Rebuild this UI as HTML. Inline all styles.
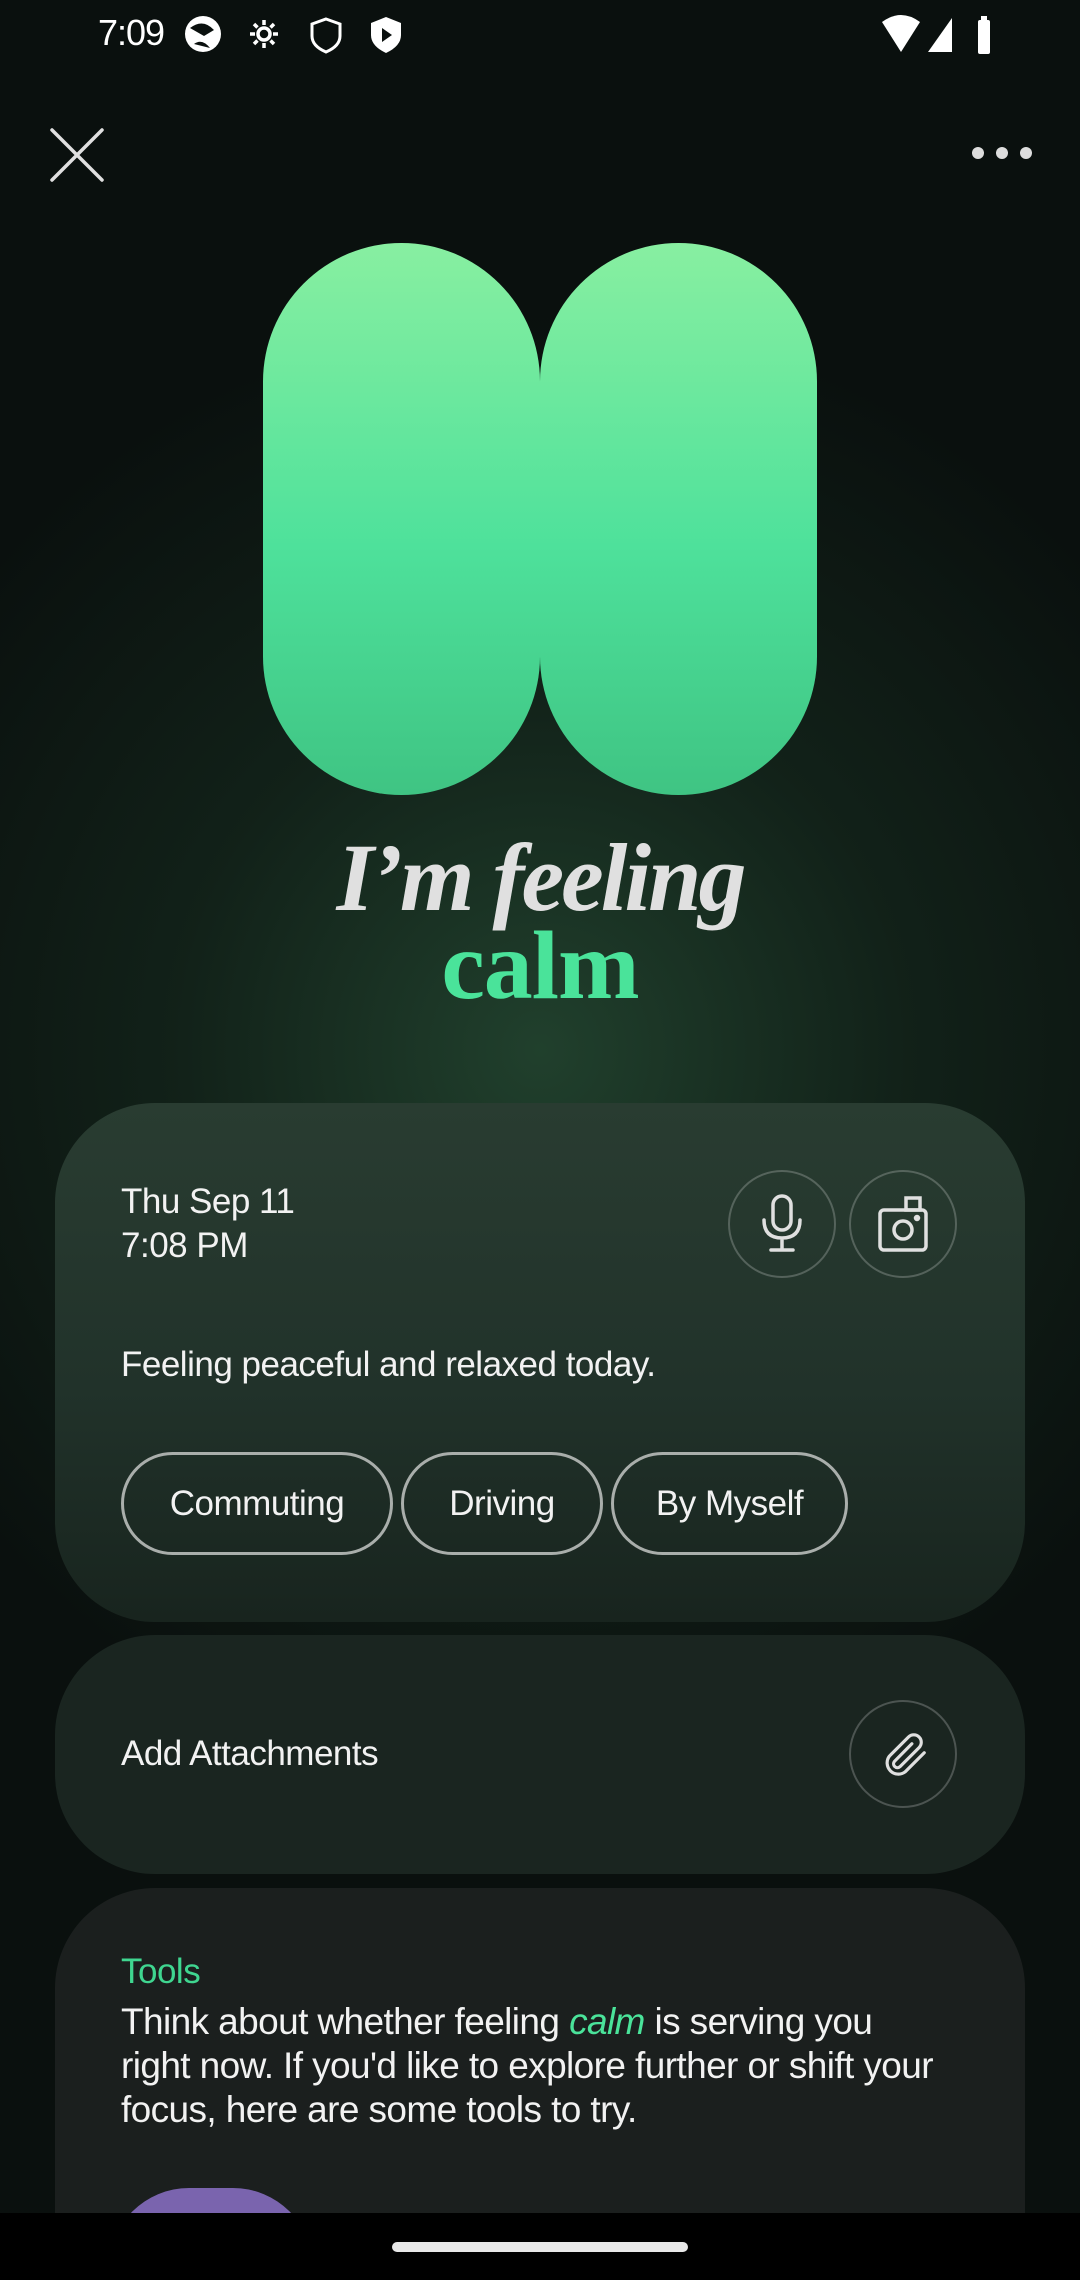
<!DOCTYPE html>
<html style="overflow:hidden;width:1080px;height:2280px"><head><meta charset="utf-8"><style>
*{margin:0;padding:0;box-sizing:border-box}
body{width:1080px;height:2280px;overflow:hidden;background:#0a100e;font-family:"Liberation Sans",sans-serif;color:#f2f2f2}
#w{position:relative;width:1080px;height:2280px;overflow:hidden}
.glow{position:absolute;left:-200px;top:300px;width:1480px;height:1500px;background:radial-gradient(ellipse at 50% 50%,rgba(40,80,55,0.75) 0%,rgba(25,50,35,0.5) 35%,rgba(10,16,14,0) 70%)}
.abs{position:absolute}
.pill{position:absolute;top:243px;width:277px;height:552px;border-radius:139px;background:linear-gradient(180deg,#88efa1 0%,#4ee19b 55%,#3fc483 100%)}
.title{position:absolute;left:0;width:1080px;text-align:center;font-family:"Liberation Serif",serif;font-weight:bold}
.card{position:absolute;left:55px;width:970px;border-radius:100px}
.circ{position:absolute;width:108px;height:108px;border-radius:54px;border:2px solid rgba(255,255,255,0.22)}
.chip{position:absolute;top:1452px;height:103px;border-radius:52px;border:3px solid #a9aeab;font-size:35px;display:flex;align-items:center;justify-content:center;letter-spacing:-0.5px}
.t32{font-size:35px;letter-spacing:-0.5px}
</style></head><body><div id="w">
<div class="glow"></div>
<div class="abs" style="left:98px;top:12px;font-size:36px;color:#fff;letter-spacing:-1px">7:09</div>
<svg class="abs" style="left:180px;top:14px" width="240" height="42" viewBox="0 0 240 42">
<circle cx="23" cy="20" r="18" fill="#fff"/><path d="M10 14 Q23 4 34 16 L24 22 Z M14 30 Q22 24 30 34" fill="#0a100e"/>
<g transform="translate(84,20)" fill="none" stroke="#fff" stroke-width="3.5"><circle r="6"/><path d="M0-14V-9M0 9V14M-14 0H-9M9 0H14M-10-10L-6.5-6.5M6.5 6.5L10 10M-10 10L-6.5 6.5M6.5-6.5L10-10"/></g>
<path d="M146 5 L160 10 V22 Q160 32 146 38 Q132 32 132 22 V10 Z" fill="none" stroke="#fff" stroke-width="3"/>
<path d="M206 3 L221 9 V21 Q221 32 206 39 Q191 32 191 21 V9 Z" fill="#fff"/><path d="M202 14 L212 21 L202 28Z" fill="#0a100e"/>
</svg>
<svg class="abs" style="left:880px;top:14px" width="130" height="42" viewBox="0 0 130 42">
<path d="M2 8 Q21 -6 40 8 L21 38 Z" fill="#fff"/><path d="M72 4 V38 H48 Z" fill="#fff"/><rect x="98" y="6" width="12" height="34" rx="2" fill="#fff"/><rect x="101" y="2" width="6" height="5" fill="#fff"/>
</svg>
<svg class="abs" style="left:50px;top:128px" width="54" height="54" viewBox="0 0 54 54"><path d="M2 2 L52 52 M52 2 L2 52" stroke="#e0e0e0" stroke-width="3.5" stroke-linecap="round"/></svg>
<svg class="abs" style="left:972px;top:143px" width="62" height="20" viewBox="0 0 62 20"><circle cx="6" cy="10" r="6" fill="#ddd"/><circle cx="30" cy="10" r="6" fill="#ddd"/><circle cx="54" cy="10" r="6" fill="#ddd"/></svg>
<div class="pill" style="left:263px"></div>
<div class="pill" style="left:540px"></div>
<div class="title" style="top:818px;font-size:96px;font-style:italic;color:#e0e0e0;letter-spacing:-3px;line-height:120px">I’m feeling</div>
<div class="title" style="top:906px;font-size:98px;color:#4ae39a;line-height:120px;letter-spacing:-1px">calm</div>
<div class="card" style="top:1103px;height:519px;background:linear-gradient(180deg,#293c31 0%,#21322a 55%,#18241e 100%)"></div>
<div class="abs t32" style="left:121px;top:1180px;line-height:44px">Thu Sep 11<br>7:08 PM</div>
<div class="circ" style="left:728px;top:1170px"></div>
<div class="circ" style="left:849px;top:1170px"></div>
<svg class="abs" style="left:758px;top:1192px" width="48" height="64" viewBox="0 0 48 64" fill="none" stroke="#e0e0e0" stroke-width="3.5" stroke-linecap="round"><rect x="15" y="4" width="18" height="34" rx="9"/><path d="M6 28 Q6 46 24 46 Q42 46 42 28 M24 46 V58 M13 58 H35"/></svg>
<svg class="abs" style="left:876px;top:1194px" width="56" height="60" viewBox="0 0 56 60" fill="none" stroke="#e0e0e0" stroke-width="3.5"><rect x="4" y="16" width="46" height="40" rx="4"/><rect x="30" y="4" width="14" height="12"/><circle cx="27" cy="36" r="9"/><circle cx="41" cy="24" r="1.5" fill="#e0e0e0"/></svg>
<div class="abs t32" style="left:121px;top:1345px">Feeling peaceful and relaxed today.</div>
<div class="chip" style="left:121px;width:272px">Commuting</div>
<div class="chip" style="left:401px;width:202px">Driving</div>
<div class="chip" style="left:611px;width:237px">By Myself</div>
<div class="card" style="top:1635px;height:239px;background:#1a2520"></div>
<div class="abs t32" style="left:121px;top:1734px">Add Attachments</div>
<div class="circ" style="left:849px;top:1700px"></div>
<svg class="abs" style="left:877px;top:1728px" width="54" height="54" viewBox="0 0 24 24" fill="none" stroke="#e0e0e0" stroke-width="1.4" stroke-linecap="round"><path d="M21 11 L12.5 19.5 a5 5 0 0 1 -7 -7 L14 4 a3.3 3.3 0 0 1 4.7 4.7 L10.2 17.2 a1.7 1.7 0 0 1 -2.4 -2.4 L15.5 7"/></svg>
<div class="card" style="top:1888px;height:500px;background:#1b1f1e"></div>
<div class="abs t32" style="left:121px;top:1952px;color:#3fd690">Tools</div>
<div class="abs" style="left:121px;top:2000px;width:900px;white-space:nowrap;font-size:37px;line-height:44px;letter-spacing:-0.6px">Think about whether feeling <i style="color:#4ae39a">calm</i> is serving you<br>right now. If you'd like to explore further or shift your<br>focus, here are some tools to try.</div>
<div class="abs" style="left:109px;top:2188px;width:204px;height:120px;border-radius:80px 80px 0 0;background:#7a64ae"></div>
<div class="abs" style="left:0;top:2213px;width:1080px;height:67px;background:#000"></div>
<div class="abs" style="left:392px;top:2242px;width:296px;height:10px;border-radius:5px;background:#e8e8e8"></div>
</div></body></html>
